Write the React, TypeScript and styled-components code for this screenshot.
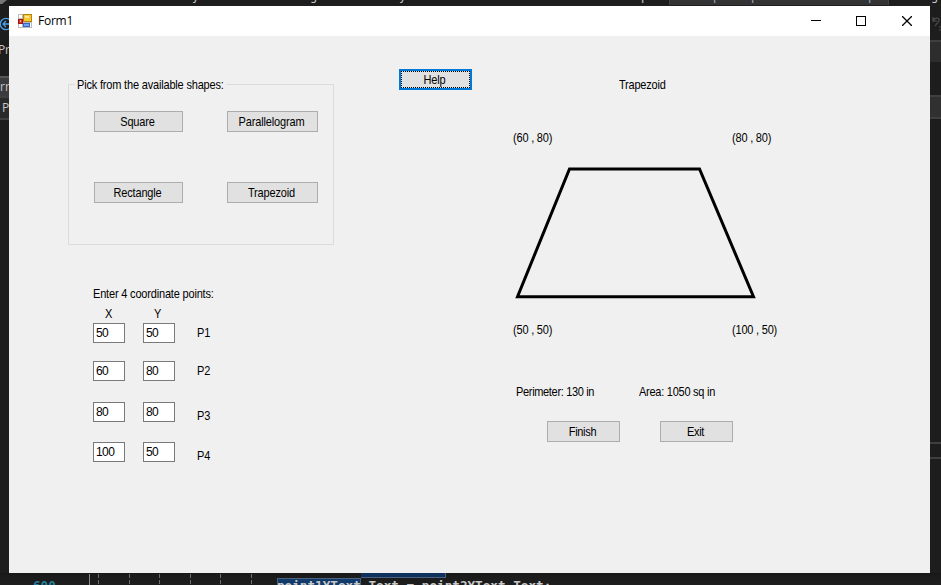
import React from "react";
import styled, { createGlobalStyle, css } from "styled-components";

const GlobalStyle = createGlobalStyle`
  body { margin: 0; background: #1e1e1e; overflow: hidden; }
  * { box-sizing: border-box; }
`;

const Desktop = styled.div`
  display: grid;
  grid-template-columns: 9px 921px 11px;
  grid-template-rows: 6px 567px 12px;
  width: 941px;
  height: 585px;
  overflow: hidden;
  background: #1d1d1d;
  color: #c8c8c8;
  font-family: "DejaVu Sans Mono", monospace;
  font-size: 12.66px;
`;

const TopStrip = styled.div`
  grid-column: 1 / -1;
  display: flex;
  height: 6px;
  overflow: hidden;
  border-bottom: 1px solid #211e1f;
`;

const Descender = styled.span<{ $gap: number; $dim?: boolean }>`
  width: 8px;
  height: 14px;
  flex: none;
  margin: -11px 0 0 ${(p) => p.$gap}px;
  font-size: 12px;
  line-height: 14px;
  color: ${(p) => (p.$dim ? "#8ba6bd" : "#c8c8c8")};
`;

const Tooltip = styled.div`
  display: flex;
  width: 220px;
  height: 5px;
  margin-left: 20px;
  background: #333334;
  border: solid #424245;
  border-width: 0 1px;
`;

const Corner = styled.svg`
  display: block;
  flex: none;
`;

const SideStrip = styled.div`
  display: flex;
  flex-direction: column;
  overflow: hidden;
  height: 567px;
  font: 12px/16px "Open Sans", sans-serif;
`;

const SideBlock = styled.div<{ $h: number; $bg?: string; $line?: string; $indent?: number }>`
  height: ${(p) => p.$h}px;
  flex: none;
  display: flex;
  align-items: center;
  overflow: hidden;
  white-space: nowrap;
  padding-left: ${(p) => p.$indent ?? 0}px;
  background: ${(p) => p.$bg ?? "transparent"};
  ${(p) => p.$line && css`border-top: 2px solid ${p.$line};`}
`;

const SideText = styled.span`
  margin-left: -2px;
  letter-spacing: -0.3px;
`;

const BottomStrip = styled.div`
  grid-column: 1 / -1;
  display: flex;
  height: 12px;
  overflow: hidden;
  background: linear-gradient(#191919, #1e1e1e);
`;

const LineNumber = styled.div`
  width: 55px;
  padding: 5px 0 0 33px;
  line-height: 15px;
  font-weight: 700;
  color: #24809c;
`;

const Guides = styled.div`
  display: flex;
  width: 222px;
  padding: 1px 0 0 34px;
`;

const Guide = styled.div<{ $solid?: boolean; $gap: number }>`
  width: 1px;
  margin-right: ${(p) => p.$gap}px;
  height: 12px;
  background: ${(p) =>
    p.$solid ? "#8a8a8a" : "repeating-linear-gradient(#6c6c6c 0 4px, transparent 4px 6px)"};
`;

const CodeLines = styled.div`
  display: flex;
  flex-direction: column;
`;

const PreviousLine = styled.div`
  width: 85px;
  height: 5px;
  margin-left: 84px;
  background: #10315c;
  border: solid #48627f;
  border-width: 0 1px 1px 0;
  flex: none;
`;

const CodeLine = styled.div`
  height: 15px;
  line-height: 15px;
  white-space: pre;
  flex: none;
  font-weight: 700;
`;

const Match = styled.span`
  display: inline-block;
  height: 15px;
  background: #123a6b;
  outline: 1px solid #48627f;
  outline-offset: -1px;
`;

const Window = styled.main`
  width: 921px;
  height: 567px;
  background: #f0f0f0;
  color: #000;
  font: 11px/14px "Liberation Sans", Arial, sans-serif;
`;

const TitleBar = styled.header`
  display: flex;
  align-items: center;
  height: 30px;
  padding-left: 9px;
  background: #fff;
  font: 12px/16px "Open Sans", sans-serif;
`;

const Title = styled.span`
  flex: 1;
  margin-left: 6px;
  letter-spacing: -0.25px;
`;

const CaptionButton = styled.button`
  display: flex;
  align-items: center;
  justify-content: center;
  width: 46px;
  height: 30px;
  padding: 0;
  border: 0;
  background: none;
`;

const Client = styled.div`
  display: flex;
  align-items: flex-start;
  height: 537px;
`;

const LeftPane = styled.section`
  width: 266px;
  margin: 41px 0 0 59px;
`;

/* Tall, tightly set lettering of the classic system typeface. */
const Label = styled.span<{ $ls?: number }>`
  display: inline-block;
  white-space: pre;
  letter-spacing: ${(p) => p.$ls ?? -0.15}px;
  transform: scaleY(1.1);
  transform-origin: 0 75%;
`;

const GroupBox = styled.fieldset`
  width: 266px;
  height: 168px;
  margin: 0;
  padding: 20px 15px 0 25px;
  border: 1px solid #dcdcdc;
  display: grid;
  grid-template-columns: 89px 91px;
  grid-template-rows: 21px 21px;
  column-gap: 44px;
  row-gap: 50px;
`;

const Legend = styled.legend`
  height: 14px;
  line-height: 16px;
  width: 151px;
  margin-left: -19px;
  padding: 0 0 0 2px;
`;

const Button = styled.button<{ $w?: number; $focused?: boolean }>`
  width: ${(p) => (p.$w ? `${p.$w}px` : "100%")};
  height: 21px;
  padding: 1px 2px 0 0;
  border: 1px solid #adadad;
  border-radius: 0;
  background: #e1e1e1;
  color: #000;
  font: 11px/18px "Liberation Sans", Arial, sans-serif;
  ${(p) =>
    p.$focused &&
    css`
      border: 2px solid #0078d7;
      line-height: 16px;
      outline: 1px dotted #000;
      outline-offset: -3px;
    `}
`;

const Points = styled.div`
  padding: 42px 0 0 25px;
`;

const AxisRow = styled.div`
  display: grid;
  grid-template-columns: 49px 20px;
  align-items: start;
  padding: 6px 0 0 12px;
  height: 22px;
`;

const PointRow = styled.div<{ $gap: number }>`
  display: grid;
  grid-template-columns: 32px 32px 20px;
  align-items: start;
  column-gap: 18px;
  height: 20px;
  margin-bottom: ${(p) => p.$gap}px;
`;

const Field = styled.input`
  width: 32px;
  height: 20px;
  padding: 0 2px;
  border: 1px solid #7a7a7a;
  border-radius: 0;
  background: #fff;
  color: #000;
  font: 12px/14px "Liberation Sans", Arial, sans-serif;
  letter-spacing: -0.6px;
`;

const PointName = styled(Label)<{ $drop: number }>`
  margin: ${(p) => 3 + p.$drop}px 0 0 4px;
`;

const HelpSlot = styled.div`
  margin: 33px 0 0 65px;
  width: 73px;
  display: flex;
`;

const ResultPane = styled.section`
  width: 290px;
  margin: 42px 0 0 41px;
`;

const ShapeName = styled.div`
  padding-left: 106px;
  height: 53px;
`;

const CoordRow = styled.div`
  display: grid;
  grid-template-columns: 219px 60px;
  height: 14px;
`;

const Drawing = styled.svg`
  display: block;
  margin: 17px 0 19px;
`;

const Measures = styled.div`
  display: grid;
  grid-template-columns: 123px 100px;
  align-items: start;
  margin: 48px 0 0 3px;
  height: 36px;
`;

const Actions = styled.div`
  display: flex;
  gap: 40px;
  padding-left: 34px;
`;

const FormIcon = () => (
  <svg width="14" height="14" shapeRendering="crispEdges">
    <path d="M0 0h14v14H0z" fill="#bcbcbc" />
    <path d="M1 1h3v3H1zM1 10h3v3H1zM12 9h1v4h-1z" fill="#fff" />
    <path d="M0 5h5v5H0z" fill="#a61515" />
    <path d="M1 6h3v3H1z" fill="#d93327" />
    <path d="M2 6h1v2H2z" fill="#ffb0a0" />
    <path d="M5 0h9v8H5z" fill="#b4840e" />
    <path d="M6 1h7v6H6z" fill="#f8c832" />
    <path d="M7 2h4v2H7z" fill="#ffe69a" />
    <path d="M5 9h7v4H5z" fill="#3267c8" />
    <path d="M6 10h5v2H6z" fill="#73a2f0" />
  </svg>
);

const points = [
  { name: "P1", x: "50", y: "50", gap: 18, drop: 0 },
  { name: "P2", x: "60", y: "80", gap: 21, drop: 0 },
  { name: "P3", x: "80", y: "80", gap: 20, drop: 4 },
  { name: "P4", x: "100", y: "50", gap: 0, drop: 4 },
];

export default function App() {
  return (
    <>
      <GlobalStyle />
      <Desktop>
        <TopStrip>
          <Corner width="9" height="5"><path d="M0 0h7L2 4H0z" fill="#777" /></Corner>
          <Descender $gap={183}>y</Descender>
          <Descender $gap={110}>g</Descender>
          <Descender $gap={81}>y</Descender>
          <Descender $gap={234}>p</Descender>
          <Tooltip>
            <Descender $gap={43} $dim>p</Descender>
            <Descender $gap={30} $dim>p</Descender>
            <Descender $gap={109} $dim>p</Descender>
          </Tooltip>
          <Descender $gap={42}>g</Descender>
        </TopStrip>
        <SideStrip>
          <SideBlock $h={35}>
            <Corner width="9" height="16" fill="none" stroke="#4a9de8" strokeWidth="1.3">
              <circle cx="6" cy="8" r="5.7" />
              <path d="M9 8H3.2M6 5L3 8l3 3" />
            </Corner>
          </SideBlock>
          <SideBlock $h={18}><SideText>Pr</SideText></SideBlock>
          <SideBlock $h={17} />
          <SideBlock $h={20} $bg="#3b3b3d" $line="#555558">rr</SideBlock>
          <SideBlock $h={22} $bg="#2a2a2b" $line="#3f3f42" $indent={2}>P</SideBlock>
          <SideBlock $h={5} $line="#3f3f42" />
        </SideStrip>
        <Window>
          <TitleBar>
            <FormIcon />
            <Title>Form1</Title>
            <CaptionButton aria-label="Minimize">
              <svg width="12" height="10" shapeRendering="crispEdges"><path d="M2 4h10v1H2z" /></svg>
            </CaptionButton>
            <CaptionButton aria-label="Maximize">
              <svg width="10" height="10" shapeRendering="crispEdges">
                <path d="M.5 .5h9v9h-9z" fill="none" stroke="#000" />
              </svg>
            </CaptionButton>
            <CaptionButton aria-label="Close">
              <svg width="10" height="10" viewBox="0 0 10 10">
                <path d="M0 0l10 10M10 0L0 10" stroke="#000" strokeWidth="1.25" />
              </svg>
            </CaptionButton>
          </TitleBar>
          <Client>
            <LeftPane>
              <GroupBox>
                <Legend><Label $ls={-0.18}>Pick from the available shapes:</Label></Legend>
                <Button><Label>Square</Label></Button>
                <Button><Label>Parallelogram</Label></Button>
                <Button><Label>Rectangle</Label></Button>
                <Button><Label>Trapezoid</Label></Button>
              </GroupBox>
              <Points>
                <Label $ls={-0.18}>Enter 4 coordinate points:</Label>
                <AxisRow><Label>X</Label><Label>Y</Label></AxisRow>
                {points.map((p) => (
                  <PointRow key={p.name} $gap={p.gap}>
                    <Field defaultValue={p.x} />
                    <Field defaultValue={p.y} />
                    <PointName $drop={p.drop} $ls={0}>{p.name}</PointName>
                  </PointRow>
                ))}
              </Points>
            </LeftPane>
            <HelpSlot><Button $w={73} $focused><Label>Help</Label></Button></HelpSlot>
            <ResultPane>
              <ShapeName><Label $ls={-0.22}>Trapezoid</Label></ShapeName>
              <CoordRow><Label $ls={-0.2}>(60 , 80)</Label><Label $ls={-0.2}>(80 , 80)</Label></CoordRow>
              <Drawing width="250" height="142">
                <path d="M56.5 7H186.5L240.5 134.7H4.5Z" fill="none" stroke="#000" strokeWidth="3" />
              </Drawing>
              <CoordRow><Label $ls={-0.2}>(50 , 50)</Label><Label $ls={-0.2}>(100 , 50)</Label></CoordRow>
              <Measures>
                <Label $ls={-0.33}>Perimeter: 130 in</Label>
                <Label $ls={-0.25}>Area: 1050 sq in</Label>
              </Measures>
              <Actions>
                <Button $w={73}><Label $ls={-0.3}>Finish</Label></Button>
                <Button $w={73}><Label $ls={-0.3}>Exit</Label></Button>
              </Actions>
            </ResultPane>
          </Client>
        </Window>
        <SideStrip>
          <SideBlock $h={34} $indent={2}>
            <Corner width="9" height="16" fill="none" stroke="#505052" strokeWidth="1.2">
              <path d="M1 2v4h4M1 6C3 2 8 2 7 6L3 11M7 12h2M7 15h2" />
            </Corner>
          </SideBlock>
          <SideBlock $h={22} $bg="#2d2d2e" $line="#3f3f42" />
          <SideBlock $h={33} />
          <SideBlock $h={22} $bg="#303031" $line="#3f3f42" />
          <SideBlock $h={325} $line="#3f3f42" />
          <SideBlock $h={15} $line="#3f3f42" />
          <SideBlock $h={116} $line="#3f3f42" />
        </SideStrip>
        <BottomStrip>
          <LineNumber>600</LineNumber>
          <Guides>
            <Guide $solid $gap={8} />
            <Guide $gap={30} />
            <Guide $gap={29} />
            <Guide $gap={30} />
            <Guide $gap={29} />
            <Guide $gap={30} />
            <Guide $gap={0} />
          </Guides>
          <CodeLines>
            <PreviousLine />
            <CodeLine><Match>point1YText</Match>.Text = point2YText.Text;</CodeLine>
          </CodeLines>
        </BottomStrip>
      </Desktop>
    </>
  );
}
